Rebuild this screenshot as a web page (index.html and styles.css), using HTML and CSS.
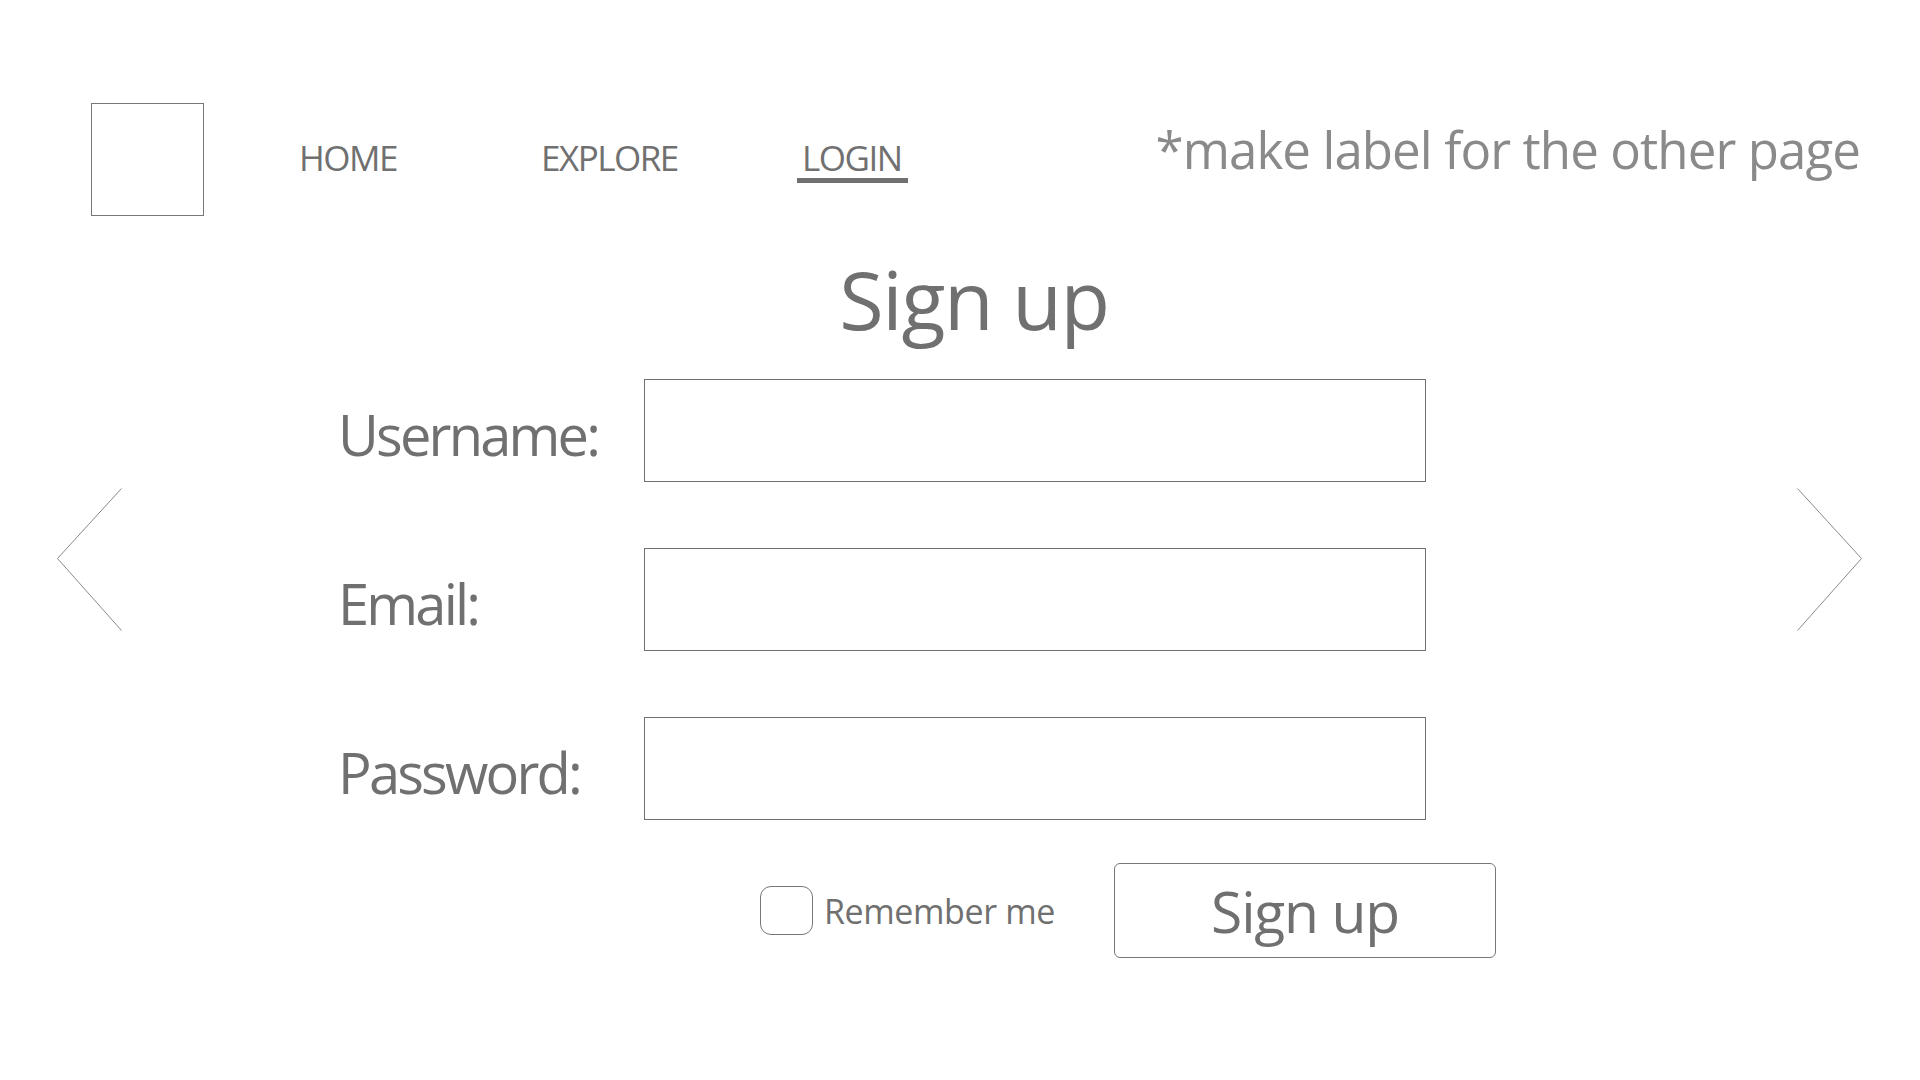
FILE: index.html
```html
<!DOCTYPE html>
<html lang="en">
<head>
<meta charset="utf-8">
<title>Sign up</title>
<link rel="stylesheet" href="styles.css">
</head>
<body>
<div class="page">
  <header class="topbar">
    <div class="logo"></div>
    <nav class="nav">
      <a class="nav-link nav-home" href="#">HOME</a>
      <a class="nav-link nav-explore" href="#">EXPLORE</a>
      <a class="nav-link nav-login active" href="#">LOGIN</a>
    </nav>
    <div class="note">*make label for the other page</div>
  </header>

  <main class="main">
    <svg class="arrow arrow-left" width="66" height="144" viewBox="0 0 66 144"><polyline points="64.5,0.5 0.5,70.5 64.5,142.5" fill="none" stroke="#8a8a8a" stroke-width="1"/></svg>
    <svg class="arrow arrow-right" width="66" height="144" viewBox="0 0 66 144"><polyline points="1.5,0.5 65.5,70.5 1.5,142.5" fill="none" stroke="#8a8a8a" stroke-width="1"/></svg>

    <h1 class="title">Sign up</h1>

    <form class="form">
      <div class="row">
        <label class="label">Username:</label>
        <div class="input"></div>
      </div>
      <div class="row">
        <label class="label">Email:</label>
        <div class="input"></div>
      </div>
      <div class="row">
        <label class="label">Password:</label>
        <div class="input"></div>
      </div>
      <div class="actions">
        <div class="remember">
          <span class="checkbox"></span>
          <span class="remember-text">Remember me</span>
        </div>
        <div class="button">Sign up</div>
      </div>
    </form>
  </main>
</div>
</body>
</html>
```

FILE: styles.css
```css
html, body {
  margin: 0;
  padding: 0;
  background: #ffffff;
}
body {
  font-family: "Open Sans", "Noto Sans", sans-serif;
  color: #707070;
  width: 1920px;
  height: 1080px;
  overflow: hidden;
}
.page {
  position: relative;
  padding-top: 103px;
}
.topbar {
  display: flex;
  align-items: flex-start;
  padding-left: 91px;
  height: 113px;
}
.logo {
  width: 113px;
  height: 113px;
  box-sizing: border-box;
  border: 1px solid #777777;
  flex: none;
}
.nav {
  display: flex;
  margin-left: 95px;
  margin-top: 32px;
}
.nav-link {
  font-size: 35px;
  line-height: 46px;
  letter-spacing: -1.5px;
  color: #707070;
  text-decoration: none;
  display: block;
}
.nav-home { width: 242px; }
.nav-explore { width: 256px; }
.nav-login {
  padding: 0 6px 0 5px;
  height: 43px;
  border-bottom: 5px solid #707070;
}
.note {
  margin-left: auto;
  margin-right: 60px;
  font-size: 51px;
  line-height: 60px;
  letter-spacing: -0.9px;
  margin-top: 16px;
  color: #8a8a8a;
}
.main {
  position: relative;
  padding-top: 33px;
}
.arrow {
  position: absolute;
  top: 272px;
}
.arrow-left { left: 57px; }
.arrow-right { left: 1796px; }
.title {
  margin: 0;
  font-weight: normal;
  font-size: 81px;
  line-height: 100px;
  letter-spacing: -1.3px;
  text-align: center;
  padding-left: 28px;
}
.form {
  margin-left: 338px;
  margin-top: 30px;
}
.row {
  display: flex;
  align-items: center;
  height: 103px;
  margin-bottom: 66px;
}
.label {
  width: 306px;
  font-size: 56px;
  letter-spacing: -2.8px;
  line-height: 80px;
  margin-top: 7px;
}
.input {
  width: 782px;
  height: 103px;
  box-sizing: border-box;
  border: 1px solid #707070;
}
.actions {
  display: flex;
  align-items: center;
  margin-top: -23px;
  margin-left: 422px;
}
.remember {
  display: flex;
  align-items: center;
  width: 354px;
}
.checkbox {
  width: 53px;
  height: 49px;
  box-sizing: border-box;
  border: 1px solid #777777;
  border-radius: 11px;
  margin-right: 11px;
  flex: none;
}
.remember-text {
  font-size: 34px;
  line-height: 44px;
  letter-spacing: -0.4px;
}
.button {
  width: 382px;
  height: 95px;
  box-sizing: border-box;
  border: 1px solid #777777;
  border-radius: 6px;
  display: flex;
  align-items: center;
  justify-content: center;
  font-size: 57px;
  line-height: 70px;
  letter-spacing: -1.2px;
}
```
